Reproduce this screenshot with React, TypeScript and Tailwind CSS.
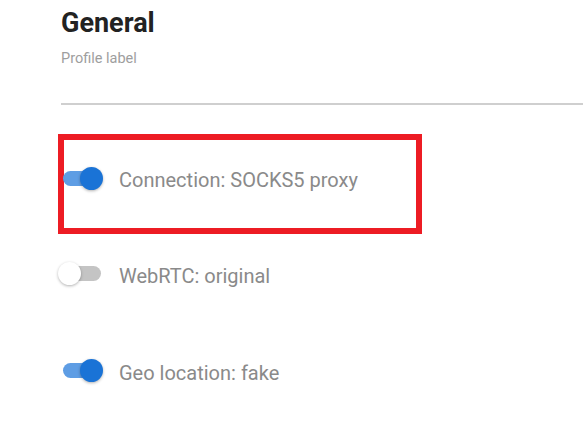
import React from "react";

function Switch({ on }: { on: boolean }) {
  return (
    <div className="relative w-[50px] h-[24px] shrink-0">
      <div
        className={
          "absolute left-[5px] top-[5px] w-[38px] h-[15px] rounded-full " +
          (on ? "bg-[#5e9de4]" : "bg-[#c4c4c4]")
        }
      />
      <div
        className={
          "absolute top-[1px] w-[23px] h-[23px] rounded-full shadow-[0_1px_3px_rgba(0,0,0,0.3)] " +
          (on ? "left-[22px] bg-[#1a73d6]" : "left-0 bg-white")
        }
      />
    </div>
  );
}

function Row({ on, label }: { on: boolean; label: string }) {
  return (
    <div className="flex items-center gap-[11px] h-[24px]">
      <Switch on={on} />
      <span className="text-[20px] leading-[24px] text-[#8a8a8a] pt-[5px]">{label}</span>
    </div>
  );
}

export default function App() {
  return (
    <div
      className="w-[583px] h-[424px] bg-white overflow-hidden pl-[58px] flex flex-col"
      style={{ fontFamily: "Roboto, 'Liberation Sans', sans-serif" }}
    >
      <div className="ml-[3px] pt-[6px] text-[27px] leading-[34px] font-bold text-[#222]">
        General
      </div>
      <div className="ml-[3px] mt-[10px] text-[14.5px] leading-[18px] text-[#9e9e9e]">
        Profile label
      </div>
      <div className="ml-[3px] mt-[35px] h-[2px] bg-[#cfcfcf]" />
      <div className="mt-[29px] w-[364px] h-[100px] border-[6px] border-[#ed1c24] flex items-center pb-[13px]">
        <div className="-ml-[6px]">
          <Row on={true} label="Connection: SOCKS5 proxy" />
        </div>
      </div>
      <div className="mt-[27px]">
        <Row on={false} label="WebRTC: original" />
      </div>
      <div className="mt-[73px]">
        <Row on={true} label="Geo location: fake" />
      </div>
    </div>
  );
}
